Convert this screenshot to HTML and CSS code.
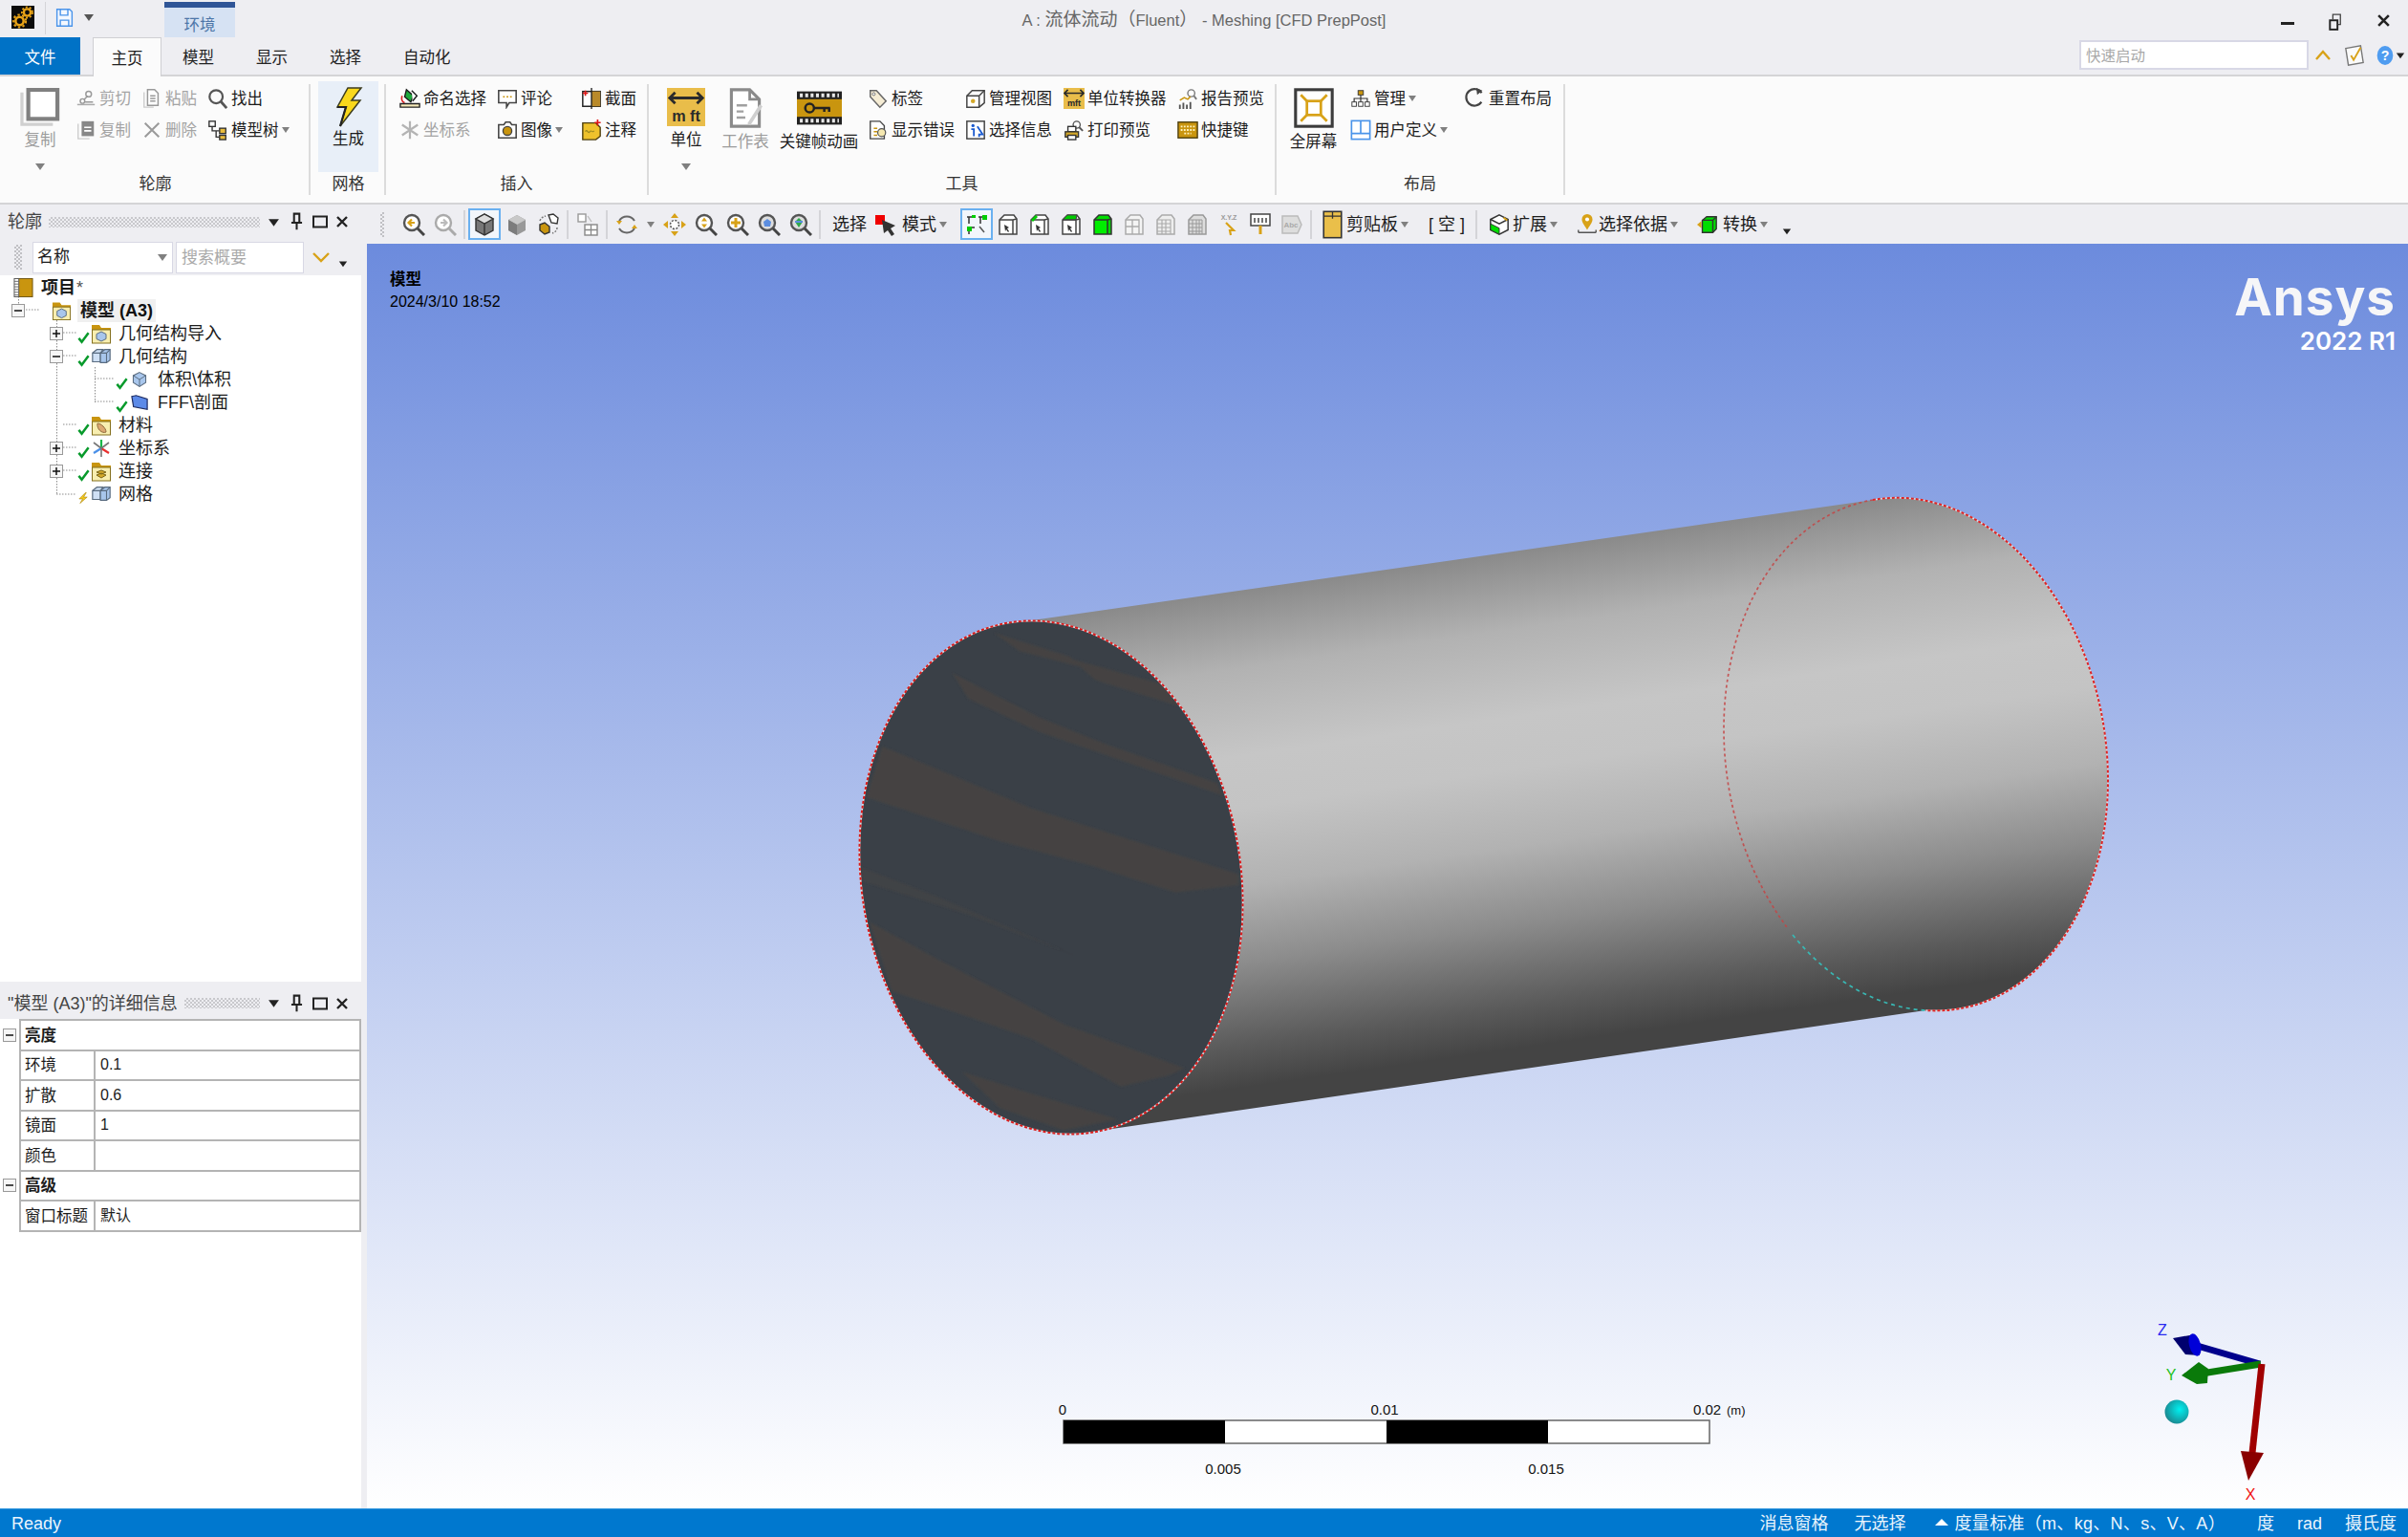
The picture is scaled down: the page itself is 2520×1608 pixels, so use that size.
FILE: index.html
```html
<!DOCTYPE html>
<html lang="zh-CN">
<head>
<meta charset="utf-8">
<title>A : 流体流动（Fluent） - Meshing [CFD PrepPost]</title>
<link rel="stylesheet" href="styles.css">
</head>
<body>
<svg class="defs" aria-hidden="true">
  <symbol id="logo" viewBox="0 0 24 24"><rect width="24" height="24" fill="#0c0c0c"/><circle cx="16.5" cy="7" r="3.6" fill="none" stroke="#e8a317" stroke-width="2.4"/><circle cx="16.5" cy="7" r="5.6" fill="none" stroke="#e8a317" stroke-width="1.8" stroke-dasharray="2 2"/><circle cx="8.5" cy="16" r="4.2" fill="none" stroke="#e8a317" stroke-width="2.6"/><circle cx="8.5" cy="16" r="6.6" fill="none" stroke="#e8a317" stroke-width="2" stroke-dasharray="2.4 2.4"/></symbol>
  <symbol id="save" viewBox="0 0 24 24"><path d="M3 2h15l3 3v17H3z" fill="#f4f8ff" stroke="#4a94ea" stroke-width="1.6"/><path d="M7 2v7h9V2M7 22v-7h10v7" fill="none" stroke="#4a94ea" stroke-width="1.6"/></symbol>
  <symbol id="dn" viewBox="0 0 12 12"><path d="M1 3h10L6 10z" fill="currentColor"/></symbol>
  <symbol id="pin" viewBox="0 0 14 20"><path d="M3 1h8M4 1h6v10H4zM1 11h12M7 11v8" fill="none" stroke="#222" stroke-width="2.2"/></symbol>
  <symbol id="box" viewBox="0 0 16 14"><rect x="1" y="1.5" width="14" height="11" fill="none" stroke="#222" stroke-width="2"/></symbol>
  <symbol id="xx" viewBox="0 0 14 14"><path d="M2 2l10 10M12 2L2 12" stroke="#222" stroke-width="2.4"/></symbol>
  <symbol id="minus" viewBox="0 0 14 14"><rect x=".5" y=".5" width="13" height="13" fill="#f6f6f6" stroke="#999"/><path d="M3 7h8" stroke="#111" stroke-width="1.5"/></symbol>
  <symbol id="plus" viewBox="0 0 14 14"><rect x=".5" y=".5" width="13" height="13" fill="#f6f6f6" stroke="#999"/><path d="M3 7h8M7 3v8" stroke="#111" stroke-width="1.5"/></symbol>
  <symbol id="check" viewBox="0 0 14 14"><path d="M1.5 8l3.4 4L12.5 2" fill="none" stroke="#089a2b" stroke-width="2.7"/></symbol>
  <symbol id="zap" viewBox="0 0 14 14"><path d="M9 1L2 8h4l-3 5 8-7H7l3-5z" fill="#f2c81c" stroke="#b08a10" stroke-width=".7"/></symbol>
  <symbol id="book" viewBox="0 0 22 22"><rect x="5" y="1" width="16" height="20" fill="#c9950f" stroke="#6d5410"/><rect x="1" y="1" width="5" height="20" fill="#fff" stroke="#555"/><path d="M1 4h5M1 7h5M1 10h5M1 13h5M1 16h5M1 19h5" stroke="#666"/></symbol>
  <symbol id="cube" viewBox="0 0 22 22"><path d="M11 2l8 4v9l-8 5-8-5V6z" fill="#a8c6ec" stroke="#5a6c80" stroke-width="1.3"/><path d="M3 6l8 5 8-5M11 11v9" fill="none" stroke="#5a6c80" stroke-width="1.2"/></symbol>
  <symbol id="cubes" viewBox="0 0 24 22"><path d="M2 7l5-4h7l-3 4v10H2z" fill="#cfe0f5" stroke="#5a6c80" stroke-width="1.3"/><path d="M11 7l5-4h6v12l-4 3h-7z" fill="#a8c6ec" stroke="#5a6c80" stroke-width="1.3"/><path d="M2 7h9M11 7h7v11M18 7l4-4" fill="none" stroke="#5a6c80" stroke-width="1.2"/></symbol>
  <symbol id="fA" viewBox="0 0 22 22"><path d="M1 2h8l2 3h10v4H1z" fill="#c9950f"/><rect x="1.5" y="7" width="19" height="14" fill="#f8eeb0" stroke="#84701e"/><path d="M11 9l5 2.5v5L11 19l-5-2.5v-5z" fill="#a8c6ec" stroke="#5a6c80"/></symbol>
  <symbol id="fB" viewBox="0 0 22 22"><path d="M1 2h8l2 3h10v4H1z" fill="#c9950f"/><rect x="1.5" y="7" width="19" height="14" fill="#f8eeb0" stroke="#84701e"/><path d="M7 9c4 0 9 5 9 9-4 2-10-3-9-9z" fill="#dca872" stroke="#8e6a3c"/></symbol>
  <symbol id="fC" viewBox="0 0 22 22"><path d="M1 2h8l2 3h10v4H1z" fill="#c9950f"/><rect x="1.5" y="7" width="19" height="14" fill="#f8eeb0" stroke="#84701e"/><path d="M6 12l5-2 5 2-5 2zM6 15l5-2 5 2-5 3z" fill="#d4a92a" stroke="#7b6618"/></symbol>
  <symbol id="coord" viewBox="0 0 22 22"><path d="M11 11V2" stroke="#19b84a" stroke-width="2.2"/><path d="M11 11L3 16" stroke="#4a90e8" stroke-width="2.2"/><path d="M11 11l8 5" stroke="#e83030" stroke-width="2.2"/><path d="M11 11L3 5M11 11l8-6M11 11v9" stroke="#777" stroke-width="1.6"/></symbol>
  <symbol id="face" viewBox="0 0 20 18"><path d="M1 2l5-1 13 4v12L3 14z" fill="#5c8ae8" stroke="#1c2a60" stroke-width="1.3"/></symbol>
  <symbol id="copybig" viewBox="0 0 44 42"><path d="M2 5v35h34" fill="none" stroke="#d0d0d0" stroke-width="3.4"/><rect x="9" y="2" width="32" height="32" fill="#fff" stroke="#808080" stroke-width="4.4"/></symbol>
  <symbol id="cut" viewBox="0 0 24 24"><path d="M2 19h20" stroke="#aaa" stroke-width="1.6"/><circle cx="15" cy="7" r="3.2" fill="none" stroke="#999" stroke-width="1.6"/><circle cx="8" cy="15" r="2.6" fill="none" stroke="#999" stroke-width="1.6"/><path d="M10 13l4-4M11 16h9" stroke="#999" stroke-width="1.6"/></symbol>
  <symbol id="paste" viewBox="0 0 24 24"><path d="M3 5v17h11" fill="none" stroke="#ccc" stroke-width="1.5"/><path d="M7 2h8l4 4v14H7z" fill="#fff" stroke="#999" stroke-width="1.6"/><path d="M10 9h6M10 12h6M10 15h6" stroke="#999" stroke-width="1.5"/></symbol>
  <symbol id="find" viewBox="0 0 24 24"><circle cx="10" cy="10" r="7.5" fill="none" stroke="#555" stroke-width="2.4"/><path d="M15 15l7 8" stroke="#555" stroke-width="3"/></symbol>
  <symbol id="copydoc" viewBox="0 0 24 24"><path d="M3 5v17h13" fill="none" stroke="#ccc" stroke-width="1.5"/><rect x="7" y="2" width="14" height="17" fill="#888"/><path d="M10 9h8M10 13h8" stroke="#fff" stroke-width="1.8"/></symbol>
  <symbol id="del" viewBox="0 0 24 24"><path d="M4 4l16 16M20 4L4 20" stroke="#9a9a9a" stroke-width="2.2"/></symbol>
  <symbol id="mtree" viewBox="0 0 24 24"><rect x="2" y="2" width="7" height="6" fill="#fff" stroke="#333" stroke-width="1.5"/><rect x="14" y="10" width="7" height="6" fill="#e9bc3c" stroke="#333" stroke-width="1.5"/><rect x="14" y="18" width="7" height="5" fill="#e9bc3c" stroke="#333" stroke-width="1.5"/><path d="M5.5 8v5h8M10 13v7h4" fill="none" stroke="#333" stroke-width="1.5"/></symbol>
  <symbol id="bolt" viewBox="0 0 30 42"><path d="M14 1h14L18 14h9L6 41l6-20H3z" fill="#f9d81c" stroke="#3c3c20" stroke-width="1.5"/><path d="M6 41l6-20H3" fill="none" stroke="#222" stroke-width="2.2"/></symbol>
  <symbol id="named" viewBox="0 0 24 24"><path d="M8 2l8 7-3 7-7-6z" fill="#1fa83c" stroke="#1a1a1a" stroke-width="1.5"/><path d="M14 3l6 6-5 6" fill="#fff" stroke="#1a1a1a" stroke-width="1.5"/><path d="M3 9c-1 4 0 7 3 8" fill="none" stroke="#d82020" stroke-width="1.8"/><path d="M1 18h22v4H1z" fill="#f4e9b8" stroke="#222" stroke-width="1.5"/></symbol>
  <symbol id="comment" viewBox="0 0 24 24"><path d="M2 3h20v14h-8l-3 5v-5H2z" fill="#fff" stroke="#444" stroke-width="1.7"/><path d="M7 10h2M11 10h2M15 10h2" stroke="#c9950f" stroke-width="1.7"/></symbol>
  <symbol id="section" viewBox="0 0 24 24"><rect x="2" y="4" width="20" height="17" fill="#fff" stroke="#222" stroke-width="1.6"/><rect x="12" y="4" width="10" height="17" fill="#b98a2a"/><path d="M12 0v24" stroke="#222" stroke-width="1.5"/><path d="M2 6h6M5 3v6" stroke="#e01818" stroke-width="1.8"/></symbol>
  <symbol id="csys" viewBox="0 0 24 24"><path d="M12 12V2M12 12v10M12 12L3 6M12 12l9-6M12 12l-9 6M12 12l9 6" stroke="#b4b4b4" stroke-width="2.4"/></symbol>
  <symbol id="camera" viewBox="0 0 24 24"><path d="M2 6h6l2-3h5l2 3h5v15H2z" fill="#fff" stroke="#444" stroke-width="1.7"/><circle cx="12" cy="13" r="5" fill="#c9950f" stroke="#444" stroke-width="1.5"/></symbol>
  <symbol id="note" viewBox="0 0 24 24"><path d="M2 4h15l5 5v10l-5 4H2z" fill="#eec22c" stroke="#4c3e10" stroke-width="1.5"/><path d="M5 14c2-4 3 3 5 0s3 2 5-1" fill="none" stroke="#9c8a20" stroke-width="1.3"/><path d="M19 0v7M15.5 3.5h7" stroke="#e01818" stroke-width="1.8"/></symbol>
  <symbol id="unit" viewBox="0 0 42 42"><rect width="42" height="42" fill="#e9bd4a"/><path d="M3 11h36M9 5l-6 6 6 6M33 5l6 6-6 6" fill="none" stroke="#2b2b2b" stroke-width="3"/></symbol>
  <symbol id="sheet" viewBox="0 0 40 46"><path d="M4 2h21l11 11v31H4z" fill="#fff" stroke="#8a8a8a" stroke-width="3.4"/><path d="M25 2v11h11" fill="none" stroke="#8a8a8a" stroke-width="3"/><path d="M10 20h12M10 27h8M10 34h10" stroke="#a0a0a0" stroke-width="2.6"/><path d="M38 20L24 42" stroke="#cfcfcf" stroke-width="4"/></symbol>
  <symbol id="film" viewBox="0 0 46 34"><rect width="46" height="34" fill="#222"/><rect y="8" width="46" height="18" fill="#c9950f"/><path d="M3 4h40M3 30h40" stroke="#e8e8e8" stroke-width="4" stroke-dasharray="3 2.5"/><circle cx="13" cy="17" r="4.5" fill="none" stroke="#222" stroke-width="2.4"/><path d="M17 17h17M28 17v4M33 17v4" stroke="#222" stroke-width="2.4"/></symbol>
  <symbol id="tag" viewBox="0 0 24 24"><path d="M3 3h7l11 12-7 7L3 10z" fill="#f5ecd4" stroke="#666" stroke-width="1.6"/><circle cx="7" cy="7" r="1.6" fill="#fff" stroke="#666"/></symbol>
  <symbol id="err" viewBox="0 0 24 24"><path d="M3 2h11l5 5v15H3z" fill="#fff" stroke="#444" stroke-width="1.5"/><path d="M7 10h4M7 14h4M7 18h4" stroke="#c9950f" stroke-width="1.7"/><circle cx="16" cy="15" r="4.5" fill="#f5e8b0" stroke="#555" stroke-width="1.3"/></symbol>
  <symbol id="mview" viewBox="0 0 24 24"><path d="M2 9l6-6h14v14l-6 5H2z" fill="#fff" stroke="#444" stroke-width="1.6"/><path d="M2 9h14v13M16 9l6-6" fill="none" stroke="#444" stroke-width="1.6"/><circle cx="9" cy="15" r="2.5" fill="#d4a92a"/></symbol>
  <symbol id="info" viewBox="0 0 24 24"><rect x="2" y="2" width="20" height="20" fill="#fff" stroke="#444" stroke-width="1.6"/><circle cx="9" cy="7" r="1.8" fill="#1a5ad0"/><path d="M7 11h3v8M14 8l6 9h-4v3" fill="none" stroke="#1a5ad0" stroke-width="2"/></symbol>
  <symbol id="uconv" viewBox="0 0 24 24"><rect width="24" height="24" fill="#e9bd4a"/><path d="M1 6h22M5 2L1 6l4 4M19 2l4 4-4 4" fill="none" stroke="#2b2b2b" stroke-width="1.8"/></symbol>
  <symbol id="print" viewBox="0 0 24 24"><circle cx="15" cy="6" r="4" fill="#fff" stroke="#555" stroke-width="1.5"/><path d="M18 9l4 4" stroke="#555" stroke-width="2"/><rect x="5" y="8" width="9" height="6" fill="#fff" stroke="#333" stroke-width="1.5"/><rect x="2" y="14" width="15" height="6" fill="#d4a92a" stroke="#333" stroke-width="1.5"/><rect x="5" y="18" width="9" height="5" fill="#fff" stroke="#333" stroke-width="1.5"/></symbol>
  <symbol id="report" viewBox="0 0 24 24"><circle cx="16" cy="6" r="4" fill="#fff" stroke="#777" stroke-width="1.5"/><path d="M19 9l3 4" stroke="#777" stroke-width="2"/><path d="M3 14l5-3 4 2 3-3" fill="none" stroke="#c9950f" stroke-width="1.7"/><path d="M3 24v-5M7 24v-7M11 24v-5M15 24v-8" stroke="#555" stroke-width="2"/></symbol>
  <symbol id="keys" viewBox="0 0 24 24"><rect x="1" y="3" width="22" height="18" fill="#c9950f" stroke="#4c3e10" stroke-width="1.5"/><path d="M4 8h16M4 12h16M8 16h8" stroke="#fff3c0" stroke-width="2" stroke-dasharray="2 1.5"/></symbol>
  <symbol id="full" viewBox="0 0 46 46"><rect x="2" y="2" width="42" height="42" fill="#fff" stroke="#3c3c3c" stroke-width="3.4"/><rect x="15" y="15" width="16" height="16" fill="none" stroke="#d8a218" stroke-width="3"/><path d="M15 15L8 8M31 15l7-7M15 31l-7 7M31 31l7 7" stroke="#d8a218" stroke-width="3"/></symbol>
  <symbol id="manage" viewBox="0 0 24 24"><rect x="9" y="3" width="6" height="5" fill="#c9950f" stroke="#333"/><rect x="2" y="16" width="5" height="5" fill="#fff" stroke="#333"/><rect x="9.5" y="16" width="5" height="5" fill="#fff" stroke="#333"/><rect x="17" y="16" width="5" height="5" fill="#fff" stroke="#333"/><path d="M12 8v8M4.5 16v-4h15v4" fill="none" stroke="#333" stroke-width="1.3"/></symbol>
  <symbol id="userdef" viewBox="0 0 24 24"><rect x="1.5" y="1.5" width="21" height="21" fill="#fff" stroke="#4a94ea" stroke-width="1.8"/><path d="M2 16h20M12 2v14" stroke="#4a94ea" stroke-width="1.8"/></symbol>
  <symbol id="reset" viewBox="0 0 24 24"><path d="M15 3A9.5 9.5 0 1 0 20 12" fill="none" stroke="#444" stroke-width="2.4" transform="rotate(30 12 12)"/><path d="M13 0l7 3-6 5z" fill="#444"/></symbol>
  <symbol id="qchev" viewBox="0 0 18 12"><path d="M2 10l7-8 7 8" fill="none" stroke="#d8a218" stroke-width="2.4"/></symbol>
  <symbol id="dchev" viewBox="0 0 18 11"><path d="M1 1l8 8 8-8" fill="none" stroke="#d8a218" stroke-width="2.4"/></symbol>
  <symbol id="qcheck" viewBox="0 0 24 26"><path d="M2 5l17-3 3 19-17 3z" fill="#fafafa" stroke="#777" stroke-width="1.5"/><path d="M8 13l3 5 8-14" fill="none" stroke="#d8a218" stroke-width="2"/></symbol>
  <symbol id="help" viewBox="0 0 24 26"><ellipse cx="12" cy="13" rx="10" ry="12" fill="#4f9cf0"/></symbol>
  <symbol id="restore" viewBox="0 0 16 22"><rect x="1.5" y="9" width="9" height="11" fill="none" stroke="#222" stroke-width="2.2"/><path d="M5 8V2h9v12h-3" fill="none" stroke="#444" stroke-width="1.5"/></symbol>
  <symbol id="zback" viewBox="0 0 24 24"><circle cx="10" cy="10" r="8" fill="#fff" stroke="#555" stroke-width="2.4"/><path d="M16 16l7 7" stroke="#444" stroke-width="3"/><path d="M13 10H7M10 6.500L6.500 10l3.500 3.500" fill="none" stroke="#d8a218" stroke-width="2.2"/></symbol>
  <symbol id="zfwd" viewBox="0 0 24 24"><circle cx="10" cy="10" r="8" fill="#fff" stroke="#aaa" stroke-width="2.4"/><path d="M16 16l7 7" stroke="#aaa" stroke-width="3"/><path d="M7 10h6M10 6.500l3.500 3.500-3.500 3.500" fill="none" stroke="#bbb" stroke-width="2.2"/></symbol>
  <symbol id="ziso" viewBox="0 0 24 24"><path d="M12 1l9 5v12l-9 5-9-5V6z" fill="#777" stroke="#333" stroke-width="1.4"/><path d="M12 1l9 5-9 5-9-5z" fill="#ddd" stroke="#333" stroke-width="1.4"/><path d="M12 11v12" stroke="#333" stroke-width="1.4"/></symbol>
  <symbol id="zcube" viewBox="0 0 24 24"><path d="M12 2l9 5v11l-9 5-9-5V7z" fill="#999"/><path d="M12 2l9 5-9 5-9-5z" fill="#c8c8c8"/><path d="M12 12v11L3 18V7z" fill="#7c7c7c"/></symbol>
  <symbol id="zmulti" viewBox="0 0 24 24"><path d="M12 2l5-1 5 4-1 6-6-1z" fill="#fff" stroke="#333" stroke-width="1.4"/><path d="M3 12l5-2 5 4v6l-5 2-5-4z" fill="#c9950f" stroke="#333" stroke-width="1.4"/><path d="M3 8c1-3 3-4 6-5M21 15c0 3-2 5-5 6" fill="none" stroke="#777" stroke-width="1.5" stroke-dasharray="2 1.5"/></symbol>
  <symbol id="zvp" viewBox="0 0 24 24"><rect x="2" y="1" width="8" height="8" fill="#fff" stroke="#999" stroke-width="1.4"/><rect x="9" y="12" width="13" height="11" fill="#fff" stroke="#888" stroke-width="1.4"/><path d="M15.5 12v11M9 17.5h13" stroke="#888" stroke-width="1.3"/><path d="M12 3l4 6" stroke="#bbb" stroke-width="1.3"/></symbol>
  <symbol id="zrot" viewBox="0 0 24 24"><path d="M4 8a9.5 9.5 0 0 1 16 0M20 16a9.5 9.5 0 0 1-16 0" fill="none" stroke="#666" stroke-width="2"/><path d="M1 8h6l-3 4zM23 16h-6l3-4z" fill="#d8a218"/></symbol>
  <symbol id="zpan" viewBox="0 0 24 24"><path d="M12 0l4 5H8zM12 24l4-5H8zM0 12l5-4v8zM24 12l-5-4v8z" fill="#d8a218"/><circle cx="12" cy="12" r="4.5" fill="#fff" stroke="#555" stroke-width="1.5" stroke-dasharray="2 1.5"/></symbol>
  <symbol id="zfit" viewBox="0 0 24 24"><circle cx="10" cy="10" r="8" fill="#fff" stroke="#555" stroke-width="2.4"/><path d="M16 16l7 7" stroke="#444" stroke-width="3"/><path d="M10 4.500l3 4H7zM10 15.500l3-4H7z" fill="#d8a218"/></symbol>
  <symbol id="zplus" viewBox="0 0 24 24"><circle cx="10" cy="10" r="8" fill="#fff" stroke="#555" stroke-width="2.4"/><path d="M16 16l7 7" stroke="#444" stroke-width="3"/><path d="M5 10h10M10 5v10" stroke="#d8a218" stroke-width="3"/></symbol>
  <symbol id="zblue" viewBox="0 0 24 24"><circle cx="10" cy="10" r="8" fill="#ddd" stroke="#555" stroke-width="2.4"/><path d="M16 16l7 7" stroke="#444" stroke-width="3"/><path d="M10 6l4 3-1 5H7L6 9z" fill="#5c8ee0"/></symbol>
  <symbol id="zgreen" viewBox="0 0 24 24"><circle cx="10" cy="10" r="8" fill="#ddd" stroke="#555" stroke-width="2.4"/><path d="M16 16l7 7" stroke="#444" stroke-width="3"/><path d="M10 5l4 4-4 6-4-6z" fill="#2fa84a"/><path d="M6 9h8" stroke="#5c8ee0" stroke-width="2"/></symbol>
  <symbol id="arrow" viewBox="0 0 24 24"><path d="M2 2h10v10H2z" fill="#f00000"/><path d="M9 7l14 6-5 3 4 6-3 2-4-6-4 3z" fill="#333"/></symbol>
  <symbol id="s0" viewBox="0 0 24 24"><path d="M2 4h8M4 4v7M14 4h8M16 4v7" fill="none" stroke="#333" stroke-width="1.5"/><path d="M2 15h8M4 15v7" fill="none" stroke="#333" stroke-width="1.5"/><path d="M15 14l5 6" stroke="#555" stroke-width="1.5"/><rect x="7" y="2" width="4" height="3" fill="#0c0"/><rect x="18" y="2" width="5" height="5" fill="#0c0"/><rect x="2" y="14" width="5" height="5" fill="#0c0"/></symbol>
  <symbol id="s1" viewBox="0 0 24 24"><path d="M3 7l5-5h10l3 4v16H3z" fill="#fff" stroke="#444" stroke-width="1.5"/><path d="M3 7h14v15M17 7l4-1" fill="none" stroke="#444" stroke-width="1.5"/><path d="M8 12l5 3-2 1 2 3-1 1-2-3-1 2z" fill="#333"/></symbol>
  <symbol id="s2" viewBox="0 0 24 24"><path d="M3 7l5-5h10l3 4v16H3z" fill="#fff" stroke="#444" stroke-width="1.5"/><path d="M3 7h14v15M17 7l4-1" fill="none" stroke="#444" stroke-width="1.5"/><path d="M3 7l5-5 2 2-5 5z" fill="#0c0"/><path d="M8 12l5 3-2 1 2 3-1 1-2-3-1 2z" fill="#333"/></symbol>
  <symbol id="s3" viewBox="0 0 24 24"><path d="M3 7l5-5h10l3 4v16H3z" fill="#fff" stroke="#444" stroke-width="1.5"/><path d="M3 7l5-5h10l-1 5z" fill="#0c0" stroke="#444"/><path d="M3 7h14v15M17 7l4-1" fill="none" stroke="#444" stroke-width="1.5"/><path d="M8 12l5 3-2 1 2 3-1 1-2-3-1 2z" fill="#333"/></symbol>
  <symbol id="s4" viewBox="0 0 24 24"><path d="M3 7l5-5h10l3 4v16H3z" fill="#0d0" stroke="#333" stroke-width="1.5"/><path d="M3 7h14v15M17 7l4-1" fill="none" stroke="#333" stroke-width="1.5"/><rect x="4" y="8" width="12" height="13" fill="#0e0"/></symbol>
  <symbol id="s5" viewBox="0 0 24 24"><path d="M3 7l5-5h10l3 4v16H3z" fill="#f4f4f4" stroke="#aaa" stroke-width="1.5"/><path d="M3 7h14v15M10 7v15M3 14h14" fill="none" stroke="#aaa" stroke-width="1.3"/></symbol>
  <symbol id="s6" viewBox="0 0 24 24"><path d="M3 7l5-5h10l3 4v16H3z" fill="#eee" stroke="#aaa" stroke-width="1.5"/><path d="M3 7h14v15M8 7v15M12 7v15M3 11h14M3 15h14M3 19h14" fill="none" stroke="#aaa" stroke-width="1.1"/></symbol>
  <symbol id="s7" viewBox="0 0 24 24"><path d="M3 7l5-5h10l3 4v16H3z" fill="#ddd" stroke="#999" stroke-width="1.5"/><path d="M3 7h14v15M7 7v15M11 7v15M14 7v15M3 11h14M3 15h14M3 19h14" fill="none" stroke="#999" stroke-width="1"/></symbol>
  <symbol id="xyz" viewBox="0 0 24 24"><path d="M9 10l8 8-4 0 1 5" fill="none" stroke="#d8a218" stroke-width="2.2"/></symbol>
  <symbol id="lbl" viewBox="0 0 24 24"><rect x="2" y="1" width="20" height="12" fill="#fff" stroke="#444" stroke-width="1.5"/><path d="M6 5v5M10 5v5M14 5v5M18 5v5" stroke="#444" stroke-width="1.5"/><path d="M12 13v9" stroke="#d8a218" stroke-width="3"/></symbol>
  <symbol id="abc" viewBox="0 0 24 24"><path d="M2 3h16l4 9-4 9H2z" fill="#ddd" stroke="#bbb" stroke-width="1.5"/></symbol>
  <symbol id="clip" viewBox="0 0 24 34"><rect x="1.5" y="1.5" width="21" height="31" fill="#eabf4a" stroke="#333" stroke-width="1.8"/><path d="M2 7h20M12 2v8" stroke="#333" stroke-width="1.5"/></symbol>
  <symbol id="extend" viewBox="0 0 24 24"><path d="M12 1l10 5v12l-10 5L2 18V6z" fill="#fff" stroke="#333" stroke-width="1.6"/><path d="M2 6l10 5 10-5" fill="none" stroke="#333" stroke-width="1.6"/><path d="M2 11l10 5v7L2 18z" fill="#0d0" stroke="#333"/><path d="M17 4l4 3" stroke="#d8a218" stroke-width="2"/></symbol>
  <symbol id="bypin" viewBox="0 0 24 26"><path d="M12 1a6 6 0 0 1 6 6c0 4-4 8-6 12-2-4-6-8-6-12a6 6 0 0 1 6-6z" fill="#d8a218"/><circle cx="12" cy="7" r="2.2" fill="#fff"/><path d="M2 22h20M2 19v3M22 19v3" fill="none" stroke="#555" stroke-width="1.5"/></symbol>
  <symbol id="conv" viewBox="0 0 24 24"><path d="M0 12l5-4v8z" fill="#d8a218"/><path d="M6 7l5-4h11v14l-4 4H6z" fill="#0d0" stroke="#333" stroke-width="1.5"/><path d="M6 7h12v14M18 7l4-4" fill="none" stroke="#333" stroke-width="1.5"/></symbol>
</svg>

<div class="app">
  <header class="titlebar">
    <div class="qat">
      <svg class="logo"><use href="#logo"/></svg>
      <span class="qat-sep"></span>
      <svg class="saveic"><use href="#save"/></svg>
      <svg class="qat-dd"><use href="#dn"/></svg>
      <div class="ctx-tab">环境</div>
    </div>
    <div class="title">A : <span class="title-cjk">流体流动（</span>Fluent<span class="title-cjk">）</span> - Meshing [CFD PrepPost]</div>
    <div class="winbtns">
      <span class="wbtn"><span class="minbar"></span></span>
      <span class="wbtn"><svg class="wrestore"><use href="#restore"/></svg></span>
      <span class="wbtn"><svg class="wclose"><use href="#xx"/></svg></span>
    </div>
  </header>

  <nav class="tabs">
    <div class="tab-file">文件</div>
    <div class="tab tab-on">主页</div>
    <div class="tab">模型</div>
    <div class="tab">显示</div>
    <div class="tab">选择</div>
    <div class="tab">自动化</div>
    <div class="quick">快速启动</div>
    <svg class="qchev"><use href="#qchev"/></svg>
    <svg class="qcheck"><use href="#qcheck"/></svg>
    <svg class="qhelp" viewBox="0 0 24 26"><use href="#help"/><text x="12" y="19" text-anchor="middle" class="svghelp">?</text></svg>
    <svg class="qhelp-dd"><use href="#dn"/></svg>
  </nav>

  <section class="ribbon">
    <div class="group g1">
      <div class="gbody">
        <div class="big bw74 off"><svg class="bi bi44"><use href="#copybig"/></svg><span>复制</span><i class="ddg"></i></div>
        <div class="smalls c69">
          <div class="si off"><svg><use href="#cut"/></svg><span>剪切</span></div>
          <div class="si off"><svg><use href="#paste"/></svg><span>粘贴</span></div>
          <div class="si"><svg><use href="#find"/></svg><span>找出</span></div>
          <div class="si off"><svg><use href="#copydoc"/></svg><span>复制</span></div>
          <div class="si off"><svg><use href="#del"/></svg><span>删除</span></div>
          <div class="si"><svg><use href="#mtree"/></svg><span>模型树</span><i class="dd"></i></div>
        </div>
      </div>
      <div class="glabel">轮廓</div>
    </div>
    <div class="group g2">
      <div class="gbody">
        <div class="gen"><svg class="bolt"><use href="#bolt"/></svg><span>生成</span></div>
      </div>
      <div class="glabel">网格</div>
    </div>
    <div class="group g3">
      <div class="gbody">
        <div class="smalls c3">
          <div class="si"><svg><use href="#named"/></svg><span>命名选择</span></div>
          <div class="si"><svg><use href="#comment"/></svg><span>评论</span></div>
          <div class="si"><svg><use href="#section"/></svg><span>截面</span></div>
          <div class="si off"><svg><use href="#csys"/></svg><span>坐标系</span></div>
          <div class="si"><svg><use href="#camera"/></svg><span>图像</span><i class="dd"></i></div>
          <div class="si"><svg><use href="#note"/></svg><span>注释</span></div>
        </div>
      </div>
      <div class="glabel">插入</div>
    </div>
    <div class="group g4">
      <div class="gbody">
        <div class="big bw78"><svg class="bi bi42" viewBox="0 0 42 42"><use href="#unit"/><text x="21" y="37" text-anchor="middle" class="svgunit">m ft</text></svg><span>单位</span><i class="ddg"></i></div>
        <div class="big bw46 off"><svg class="bi bi42"><use href="#sheet"/></svg><span>工作表</span></div>
        <div class="big bw102"><svg class="bi bi47"><use href="#film"/></svg><span>关键帧动画</span></div>
        <div class="smalls c4">
          <div class="si"><svg><use href="#tag"/></svg><span>标签</span></div>
          <div class="si"><svg><use href="#mview"/></svg><span>管理视图</span></div>
          <div class="si"><svg viewBox="0 0 24 24"><use href="#uconv"/><text x="12" y="21" text-anchor="middle" class="svgunit2">mft</text></svg><span>单位转换器</span></div>
          <div class="si"><svg><use href="#report"/></svg><span>报告预览</span></div>
          <div class="si"><svg><use href="#err"/></svg><span>显示错误</span></div>
          <div class="si"><svg><use href="#info"/></svg><span>选择信息</span></div>
          <div class="si"><svg><use href="#print"/></svg><span>打印预览</span></div>
          <div class="si"><svg><use href="#keys"/></svg><span>快捷键</span></div>
        </div>
      </div>
      <div class="glabel">工具</div>
    </div>
    <div class="group g5">
      <div class="gbody">
        <div class="big bw77"><svg class="bi bi44"><use href="#full"/></svg><span>全屏幕</span></div>
        <div class="smalls c5">
          <div class="si"><svg><use href="#manage"/></svg><span>管理</span><i class="dd"></i></div>
          <div class="si"><svg><use href="#reset"/></svg><span>重置布局</span></div>
          <div class="si"><svg><use href="#userdef"/></svg><span>用户定义</span><i class="dd"></i></div>
        </div>
      </div>
      <div class="glabel">布局</div>
    </div>
  </section>

  <main class="main">
    <aside class="left">
      <div class="phead">
        <span class="ptitle">轮廓</span><span class="pgrip"></span>
        <svg class="pdn"><use href="#dn"/></svg><svg class="ppin"><use href="#pin"/></svg><svg class="pbox"><use href="#box"/></svg><svg class="pclose"><use href="#xx"/></svg>
      </div>
      <div class="filter">
        <span class="vgrip"></span>
        <div class="combo"><span>名称</span><i class="ddg"></i></div>
        <div class="search">搜索概要</div>
        <svg class="fchev"><use href="#dchev"/></svg>
        <svg class="fdn"><use href="#dn"/></svg>
      </div>
      <div class="tree">
        <svg class="tree-lines" viewBox="0 0 378 260">
          <path d="M19.5 22v8M27 36h14M59.5 47v182M66 60h14M66 84h14M66 156h14M66 180h14M66 204h14M59 229h21M99.5 96v37M99 108h21M99 132h21" fill="none" stroke="#8c8c8c" stroke-dasharray="1.5 1.5"/>
        </svg>
        <div class="trow l0"><svg class="ti-book"><use href="#book"/></svg><span class="b">项目</span><span class="bstar">*</span></div>
        <div class="trow l1"><svg class="exp"><use href="#minus"/></svg><svg class="ti-l1"><use href="#fA"/></svg><span class="b hl">模型 <span class="a3">(A3)</span></span></div>
        <div class="trow l2"><svg class="exp"><use href="#plus"/></svg><svg class="chk"><use href="#check"/></svg><svg class="ti"><use href="#fA"/></svg><span>几何结构导入</span></div>
        <div class="trow l2"><svg class="exp"><use href="#minus"/></svg><svg class="chk"><use href="#check"/></svg><svg class="ti"><use href="#cubes"/></svg><span>几何结构</span></div>
        <div class="trow l3"><svg class="chk"><use href="#check"/></svg><svg class="ti3"><use href="#cube"/></svg><span>体积\体积</span></div>
        <div class="trow l3"><svg class="chk"><use href="#check"/></svg><svg class="ti3"><use href="#face"/></svg><span>FFF\剖面</span></div>
        <div class="trow l2"><span class="exp"></span><svg class="chk"><use href="#check"/></svg><svg class="ti"><use href="#fB"/></svg><span>材料</span></div>
        <div class="trow l2"><svg class="exp"><use href="#plus"/></svg><svg class="chk"><use href="#check"/></svg><svg class="ti"><use href="#coord"/></svg><span>坐标系</span></div>
        <div class="trow l2"><svg class="exp"><use href="#plus"/></svg><svg class="chk"><use href="#check"/></svg><svg class="ti"><use href="#fC"/></svg><span>连接</span></div>
        <div class="trow l2"><span class="exp"></span><svg class="chk"><use href="#zap"/></svg><svg class="ti"><use href="#cubes"/></svg><span>网格</span></div>
      </div>
      <div class="phead dhead">
        <span class="ptitle">"模型 (A3)"的详细信息</span><span class="pgrip"></span>
        <svg class="pdn"><use href="#dn"/></svg><svg class="ppin"><use href="#pin"/></svg><svg class="pbox"><use href="#box"/></svg><svg class="pclose"><use href="#xx"/></svg>
      </div>
      <div class="details">
        <table class="dt">
          <colgroup><col class="col-ex"><col class="col-k"><col class="col-v"></colgroup>
          <tr><td class="ex"><svg class="exp"><use href="#minus"/></svg></td><th colspan="2">亮度</th></tr>
          <tr><td class="ex"></td><td>环境</td><td class="v">0.1</td></tr>
          <tr><td class="ex"></td><td>扩散</td><td class="v">0.6</td></tr>
          <tr><td class="ex"></td><td>镜面</td><td class="v">1</td></tr>
          <tr><td class="ex"></td><td>颜色</td><td class="v"></td></tr>
          <tr><td class="ex"><svg class="exp"><use href="#minus"/></svg></td><th colspan="2">高级</th></tr>
          <tr><td class="ex"></td><td>窗口标题</td><td class="v">默认</td></tr>
        </table>
      </div>
    </aside>

    <div class="right">
      <div class="toolbar">
        <span class="tgrip"></span>
        <span class="tc"><svg><use href="#zback"/></svg></span>
        <span class="tc"><svg><use href="#zfwd"/></svg></span>
        <span class="tsep"></span>
        <span class="tc tsel"><svg><use href="#ziso"/></svg></span>
        <span class="tc"><svg><use href="#zcube"/></svg></span>
        <span class="tc"><svg><use href="#zmulti"/></svg></span>
        <span class="tsep"></span>
        <span class="tc"><svg><use href="#zvp"/></svg></span>
        <span class="tsep"></span>
        <span class="tc"><svg><use href="#zrot"/></svg></span>
        <span class="tdd"><i class="dd"></i></span>
        <span class="tc"><svg><use href="#zpan"/></svg></span>
        <span class="tc"><svg><use href="#zfit"/></svg></span>
        <span class="tc"><svg><use href="#zplus"/></svg></span>
        <span class="tc"><svg><use href="#zblue"/></svg></span>
        <span class="tc"><svg><use href="#zgreen"/></svg></span>
        <span class="tsep"></span>
        <span class="tt tt-sel">选择</span>
        <span class="tc tc-arrow"><svg><use href="#arrow"/></svg></span>
        <span class="tt">模式</span><i class="dd"></i>
        <span class="tc tsel tsel2"><svg><use href="#s0"/></svg></span>
        <span class="tc"><svg><use href="#s1"/></svg></span>
        <span class="tc"><svg><use href="#s2"/></svg></span>
        <span class="tc"><svg><use href="#s3"/></svg></span>
        <span class="tc"><svg><use href="#s4"/></svg></span>
        <span class="tc"><svg><use href="#s5"/></svg></span>
        <span class="tc"><svg><use href="#s6"/></svg></span>
        <span class="tc"><svg><use href="#s7"/></svg></span>
        <span class="tc"><svg viewBox="0 0 24 24"><use href="#xyz"/><text x="12" y="7" text-anchor="middle" class="svgxyz">X.Y.Z</text></svg></span>
        <span class="tc"><svg><use href="#lbl"/></svg></span>
        <span class="tc"><svg viewBox="0 0 24 24"><use href="#abc"/><text x="11" y="15" text-anchor="middle" class="svgabc">Abc</text></svg></span>
        <span class="tsep"></span>
        <svg class="tclip"><use href="#clip"/></svg><span class="tt">剪贴板</span><i class="dd"></i>
        <span class="tt tt-empty">[ 空 ]</span>
        <span class="tsep"></span>
        <svg class="tic"><use href="#extend"/></svg><span class="tt">扩展</span><i class="dd"></i>
        <svg class="tic tic-by"><use href="#bypin"/></svg><span class="tt">选择依据</span><i class="dd"></i>
        <svg class="tic tic-cv"><use href="#conv"/></svg><span class="tt">转换</span><i class="dd"></i>
        <svg class="tend"><use href="#dn"/></svg>
      </div>

      <div class="viewport">
        <svg class="canvas" viewBox="384 255 2136 1323">
          <defs>
            <linearGradient id="shade" gradientUnits="userSpaceOnUse" x1="1975" y1="521" x2="2051" y2="1052">
              <stop offset="0" stop-color="#8a8a8a"/><stop offset=".15" stop-color="#b2b2b2"/><stop offset=".32" stop-color="#c6c6c6"/><stop offset=".42" stop-color="#c4c4c4"/><stop offset=".57" stop-color="#b2b2b2"/><stop offset=".72" stop-color="#8c8c8c"/><stop offset=".88" stop-color="#5a5a5a"/><stop offset=".96" stop-color="#444"/><stop offset="1" stop-color="#444"/>
            </linearGradient>
            <clipPath id="fc"><ellipse cx="1100" cy="918" rx="270.2" ry="198.3" transform="rotate(80.6 1100 918)"/></clipPath>
            <radialGradient id="ball" cx=".62" cy=".4" r=".7"><stop offset="0" stop-color="#00f0f0"/><stop offset="1" stop-color="#1c7f88"/></radialGradient>
            <filter id="soft" x="-5%" y="-5%" width="110%" height="110%"><feGaussianBlur stdDeviation="2.5"/></filter>
          </defs>
          <path d="M1080 649L1960 523A270.2 198.3 80.6 0 1 2206 814A270.2 198.3 80.6 0 1 2015 1057L1150 1183Z" fill="url(#shade)"/>
          <g clip-path="url(#fc)">
            <rect x="880" y="620" width="440" height="600" fill="#3a4047"/>
            <g transform="translate(880 620) scale(.3333 .3827)" fill="#444343" filter="url(#soft)">
              <polygon points="130,420 600,590 1250,770 1250,800 1050,820 800,750 500,680 80,560"/>
              <polygon points="720,180 1010,250 1060,310 800,240"/>
              <polygon points="480,110 720,175 760,205 560,160"/>
              <polygon points="350,220 620,340 820,410 1180,520 1200,555 950,480 620,380 400,290"/>
              <polygon points="90,900 300,1000 700,1180 1080,1300 1030,1320 880,1350 600,1220 300,1130 160,1090"/>
              <polygon points="380,1310 600,1370 870,1440 700,1470 500,1410"/>
              <polygon points="60,750 300,830 700,980 760,1000 400,880 70,790" opacity=".6"/>
            </g>
          </g>
          <ellipse cx="1100" cy="918" rx="270.2" ry="198.3" transform="rotate(80.6 1100 918)" fill="none" stroke="#d8dfe8" stroke-width="1.6"/>
          <ellipse cx="1100" cy="918" rx="270.2" ry="198.3" transform="rotate(80.6 1100 918)" fill="none" stroke="#d81c1c" stroke-width="2" stroke-dasharray="3 2"/>
          <path d="M1960 523A270.2 198.3 80.6 0 1 2206 814A270.2 198.3 80.6 0 1 2015 1057" fill="none" stroke="#d8dfe8" stroke-width="1.6"/>
          <path d="M1960 523A270.2 198.3 80.6 0 1 2206 814A270.2 198.3 80.6 0 1 2015 1057" fill="none" stroke="#de2424" stroke-width="2" stroke-dasharray="3 2"/>
          <path d="M1960 523A270.2 198.3 80.6 0 0 1804 764A270.2 198.3 80.6 0 0 1870 970" fill="none" stroke="#c44444" stroke-width="1.7" stroke-dasharray="3 3" opacity=".85"/>
          <path d="M1876 978A270.2 198.3 80.6 0 0 2015 1057" fill="none" stroke="#38b8b4" stroke-width="1.7" stroke-dasharray="4 4"/>

          <g class="scale">
            <rect x="1113" y="1486" width="676" height="24" fill="#fff" stroke="#666" stroke-width="1.5"/>
            <rect class="seg" x="1113" y="1486" width="169" height="24"/>
            <rect class="seg" x="1451" y="1486" width="169" height="24"/>
            <text x="1112" y="1480" text-anchor="middle">0</text>
            <text x="1449" y="1480" text-anchor="middle">0.01</text>
            <text x="1772" y="1480">0.02</text>
            <text x="1807" y="1480" class="unit-m">(m)</text>
            <text x="1280" y="1542" text-anchor="middle">0.005</text>
            <text x="1618" y="1542" text-anchor="middle">0.015</text>
          </g>

          <g class="triad">
            <path d="M2365 1427L2296 1407" stroke="#00008c" stroke-width="7"/>
            <path d="M2274 1400L2297 1396L2302 1418L2287 1417Z" fill="#00006e"/>
            <ellipse cx="2297" cy="1407" rx="6" ry="12" fill="#0000d8" transform="rotate(-15 2297 1407)"/>
            <path d="M2366 1427L2304 1437" stroke="#0a7a0a" stroke-width="7"/>
            <path d="M2283 1439L2301 1425L2311 1432L2310 1447L2299 1448Z" fill="#0a7a0a"/>
            <path d="M2367 1427L2357 1520" stroke="#a00000" stroke-width="7"/>
            <path d="M2345 1518L2369 1520L2353 1549Z" fill="#8a0000"/>
            <circle cx="2278" cy="1477" r="12.5" fill="url(#ball)"/>
            <text x="2263" y="1397" text-anchor="middle" class="tz">Z</text>
            <text x="2272" y="1444" text-anchor="middle" class="ty">Y</text>
            <text x="2355" y="1569" text-anchor="middle" class="tx">X</text>
          </g>
        </svg>
        <div class="vp-info"><div class="vp-title">模型</div><div class="vp-date">2024/3/10 18:52</div></div>
        <div class="brand"><div class="brand-name">Ansys</div><div class="brand-ver">2022 R1</div></div>
      </div>
    </div>
  </main>

  <footer class="status">
    <span class="ready">Ready</span>
    <span class="st st-msg">消息窗格</span>
    <span class="st st-sel">无选择</span>
    <i class="st-up"></i>
    <span class="st st-unit">度量标准（m、kg、N、s、V、A）</span>
    <span class="st st-deg">度</span>
    <span class="st st-rad">rad</span>
    <span class="st st-temp">摄氏度</span>
  </footer>
</div>
</body>
</html>
```

FILE: styles.css
```css
* { box-sizing: border-box; }
html, body { margin: 0; padding: 0; }
body {
  width: 2520px; height: 1608px; overflow: hidden;
  background: #eeeef2; color: #1c1c1c;
  font: 16.5px/22px "Liberation Sans", "Noto Sans CJK SC", sans-serif;
}
.defs { width: 0; height: 0; display: block; overflow: hidden; }
.svgunit { font: 700 17px "Liberation Sans", sans-serif; fill: #2b2b2b; }
.svgunit2 { font: 700 10px "Liberation Sans", sans-serif; fill: #2b2b2b; }
.svghelp { font: 700 17px "Liberation Sans", sans-serif; fill: #fff; }
.svgxyz { font: 700 7px "Liberation Sans", sans-serif; fill: #999; }
.svgabc { font: 700 8px "Liberation Sans", sans-serif; fill: #aaa; }
i { display: block; }
.dd { width: 0; height: 0; border: 4px solid transparent; border-top: 6px solid #808080; border-bottom: 0; margin-left: 3px; flex: none; }
.ddg { width: 0; height: 0; border: 5px solid transparent; border-top: 7px solid #808080; border-bottom: 0; }

.app { display: flex; flex-direction: column; width: 2520px; height: 1608px; }

/* title row */
.titlebar { height: 39px; flex: none; display: grid; grid-template-columns: 1fr auto 1fr; align-items: center; background: #eeeef2; }
.qat { display: flex; align-items: flex-start; height: 39px; padding-left: 12px; }
.logo { width: 24px; height: 24px; margin-top: 4px; }
.qat-sep { width: 1px; height: 34px; background: #d4d4d8; margin: 0 9px 0 11px; }
.saveic { width: 21px; height: 21px; margin-top: 6px; }
.qat-dd { width: 12px; height: 12px; margin: 10px 0 0 9px; color: #555; }
.ctx-tab { width: 74px; height: 39px; margin-left: 73px; background: #d6e2f3; border-top: 6px solid #2f5597; color: #4d76a8; text-align: center; font-size: 16.5px; line-height: 36px; }
.title { color: #666; font-size: 16.5px; line-height: 42px; white-space: pre; }
.title-cjk { font-size: 19px; }
.winbtns { display: flex; justify-content: flex-end; padding-right: 1px; }
.wbtn { width: 50px; height: 39px; display: flex; align-items: center; justify-content: center; }
.minbar { width: 14px; height: 3px; background: #222; margin-top: 6px; }
.wrestore { width: 14px; height: 20px; margin-top: 4px; }
.wclose { width: 15px; height: 17px; }

/* tab row */
.tabs { height: 39px; flex: none; display: flex; align-items: stretch; background: #eeeef2; font-size: 16.5px; line-height: 43px; }
.tab-file { width: 84px; background: #0072c6; color: #fff; text-align: center; }
.tab { padding: 0 22px; color: #222; }
.tab-on { width: 72px; padding: 0; margin-left: 13px; text-align: center; background: #fbfbfb; border: 1px solid #cfcfd3; border-bottom: 0; margin-bottom: -2px; position: relative; }
.quick { width: 240px; height: 31px; margin: 3px 0 0 auto; background: #fff; border: 2px solid #d8d8e6; color: #a8a8a8; font-size: 15.5px; line-height: 29px; padding-left: 5px; }
.qchev { width: 18px; height: 12px; margin: 13px 0 0 6px; }
.qcheck { width: 22px; height: 24px; margin: 7px 0 0 13px; }
.qhelp { width: 20px; height: 24px; margin: 7px 0 0 11px; }
.qhelp-dd { width: 10px; height: 10px; margin: 14px 3px 0 1px; color: #222; }

/* ribbon */
.ribbon { height: 136px; flex: none; display: flex; background: #fbfbfb; border-top: 2px solid #d4d4d6; border-bottom: 2px solid #d4d4d6; }
.group { display: flex; flex-direction: column; position: relative; }
.group::after { content: ""; position: absolute; right: 0; top: 8px; bottom: 8px; width: 2px; background: #dcdcdc; }
.g1 { width: 325px; }
.g2 { width: 79px; }
.g3 { width: 275px; }
.g4 { width: 657px; }
.g5 { width: 302px; }
.gbody { flex: 1; display: flex; min-height: 0; }
.glabel { height: 30px; margin-bottom: 4px; text-align: center; font-size: 17px; line-height: 30px; color: #333; padding-right: 2px; }
.g1 .glabel, .g2 .glabel { padding-right: 0; }
.g1 .gbody { padding-left: 5px; }
.g3 .gbody { padding-left: 14px; }
.big { display: flex; flex-direction: column; align-items: center; padding-top: 12px; flex: none; }
.big span { margin-top: 3px; white-space: nowrap; }
.big .ddg { margin-top: 14px; }
.big.off { color: #9c9c9c; }
.bw74 { width: 74px; }
.bw78 { width: 78px; }
.bw77 { width: 77px; }
.bw46 { width: 46px; }
.bw102 { width: 102px; margin-left: 3px; }
.bi { display: block; }
.bi44 { width: 44px; height: 42px; }
.bi42 { width: 42px; height: 42px; }
.bi47 { width: 47px; height: 42px; }
.smalls { display: grid; grid-auto-rows: 33px; padding-top: 6px; align-content: start; }
.c69 { grid-template-columns: 69px 69px 100px; }
.c3 { grid-template-columns: 102px 88px 70px; }
.c4 { grid-template-columns: 102px 103px 119px 100px; }
.c5 { grid-template-columns: 120px 100px; }
.si { display: flex; align-items: center; white-space: nowrap; height: 33px; }
.si svg { width: 22px; height: 22px; margin-right: 3px; flex: none; }
.si.off { color: #a4a4a4; }
.gen { width: 63px; height: 95px; margin: 5px 0 0 8px; background: #e8eff8; display: flex; flex-direction: column; align-items: center; padding-top: 6px; }
.bolt { width: 30px; height: 42px; }
.gen span { margin-top: 1px; }

/* main */
.main { flex: 1; display: flex; min-height: 0; }
.left { width: 384px; flex: none; display: flex; flex-direction: column; background: #eeeef2; padding-right: 6px; }
.phead { height: 36px; flex: none; display: flex; align-items: center; padding-left: 8px; font-size: 18px; color: #444; }
.ptitle { white-space: nowrap; }
.pgrip { flex: 1; height: 11px; margin: 0 8px 0 7px; background: repeating-conic-gradient(#c8c8cc 0 25%, transparent 0 50%) 0 0 / 4px 4px; }
.pdn { width: 13px; height: 13px; color: #222; margin-right: 11px; }
.ppin { width: 13px; height: 20px; margin-right: 10px; }
.pbox { width: 16px; height: 14px; margin-right: 8px; }
.pclose { width: 14px; height: 14px; margin-right: 13px; }
.filter { height: 38px; flex: none; display: flex; align-items: center; font-size: 17px; }
.vgrip { width: 8px; height: 26px; margin: 0 11px 0 15px; background: repeating-conic-gradient(#c0c0c4 0 25%, transparent 0 50%) 0 0 / 4px 4px; }
.combo { width: 147px; height: 33px; background: #fff; border: 1px solid #d8d8e4; display: flex; align-items: center; justify-content: space-between; padding: 0 5px 0 4px; }
.search { width: 134px; height: 33px; margin-left: 3px; background: #fff; border: 1px solid #d8d8e4; color: #aaa; line-height: 31px; padding-left: 5px; }
.fchev { width: 18px; height: 11px; margin-left: 9px; }
.fdn { width: 10px; height: 10px; margin: 14px 0 0 9px; color: #222; }

.tree { height: 739px; flex: none; background: #fff; position: relative; font-size: 18px; padding-top: 1px; }
.tree-lines { position: absolute; left: 0; top: 0; width: 378px; height: 260px; pointer-events: none; }
.trow { height: 24px; display: flex; align-items: center; position: relative; white-space: nowrap; }
.trow svg { flex: none; }
.exp { width: 14px; height: 14px; flex: none; display: block; }
.chk { width: 13px; height: 14px; margin-top: 8px; }
.l0 { padding-left: 14px; }
.ti-book { width: 21px; height: 22px; margin-right: 8px; }
.b { font-weight: 700; }
.bstar { color: #555; margin-left: 1px; }
.l1 { padding-left: 12px; }
.ti-l1 { width: 21px; height: 22px; margin: 0 6px 0 28px; }
.hl { background: #f0f0f0; padding: 0 3px; line-height: 24px; }
.a3 { color: #111; font-weight: 700; }
.l2 { padding-left: 52px; }
.l2 .chk { margin-left: 15px; }
.ti { width: 22px; height: 22px; margin: 0 7px 0 1px; }
.l3 { padding-left: 121px; }
.ti3 { width: 18px; height: 18px; margin: 0 10px 0 3px; }

.dhead { height: 39px; padding-top: 6px; border-top: 0; }
.details { flex: 1; background: #fff; min-height: 0; }
.dt { border-collapse: collapse; width: 378px; table-layout: fixed; font-size: 16.5px; }
.col-ex { width: 21px; }
.col-k { width: 78px; }
.dt td, .dt th { height: 31.5px; border: 2px solid #b4b4b4; padding: 0 2px 0 4px; text-align: left; font-weight: 400; white-space: nowrap; line-height: 20px; overflow: hidden; }
.dt th { font-weight: 700; }
.dt .ex { border: 0; padding: 0 0 0 3px; border-right: 2px solid #b4b4b4; }
.dt .v { padding-left: 5px; font-size: 16px; }

/* toolbar + viewport */
.right { flex: 1; display: flex; flex-direction: column; min-width: 0; }
.toolbar { height: 41px; flex: none; display: flex; align-items: center; background: #eeeef2; font-size: 18px; }
.tgrip { width: 32px; height: 26px; flex: none; background: repeating-conic-gradient(#c0c0c4 0 25%, transparent 0 50%) 14px 0 / 4px 4px; background-repeat: repeat-y; }
.tc { width: 33px; height: 33px; display: flex; align-items: center; justify-content: center; flex: none; }
.tc svg { width: 24px; height: 24px; }
.tsel { width: 34px; border: 2px solid #6ab0f0; background: #f2f6fb; }
.tsep { width: 8px; height: 30px; flex: none; position: relative; background: linear-gradient(#d4d4d8, #d4d4d8) center / 2px 100% no-repeat; }
.tdd { width: 17px; display: flex; justify-content: center; }
.tdd .dd { margin: 0; }
.tt { white-space: nowrap; flex: none; line-height: 24px; }
.tt-sel { margin-left: 9px; }
.tc-arrow { width: 37px; }
.tsel2 { margin-left: 14px; }
.tsel2 + .tc { margin-left: -1px; }
.tclip { width: 23px; height: 30px; margin: 0 3px 0 7px; flex: none; }
.tt-empty { margin: 0 8px 0 21px; }
.tic { width: 22px; height: 22px; margin: 0 3px 0 9px; flex: none; }
.tic-by { margin: 0 0 0 19px; width: 24px; height: 24px; }
.tic-cv { margin: 0 5px 0 20px; }
.tend { width: 10px; height: 10px; margin: 14px 0 0 15px; color: #222; flex: none; }

.viewport { flex: 1; position: relative; min-height: 0; background: linear-gradient(#6c8bdd, #fff); overflow: hidden; }
.canvas { position: absolute; left: 0; top: 0; width: 2136px; height: 1323px; }
.scale { font: 15px "Liberation Sans", sans-serif; fill: #111; }
.seg { fill: #000; }
.unit-m { font-size: 13px; }
.triad text { font: 16px "Liberation Sans", sans-serif; }
.tz { fill: #2a2af0; }
.ty { fill: #22c022; }
.tx { fill: #f01010; }
.vp-info { position: absolute; left: 24px; top: 25px; color: #000; }
.vp-title { font-size: 16.5px; line-height: 24px; font-weight: 700; }
.vp-date { font-size: 16px; line-height: 24px; }
.brand { position: absolute; right: 13px; top: 26px; color: #f6f6f8; text-align: right; font-family: Inter, "Liberation Sans", sans-serif; font-weight: 700; }
.brand-name { font-size: 53px; line-height: 60px; letter-spacing: 1px; }
.brand-ver { font-size: 26px; line-height: 26px; margin-top: 3px; color: #fff; font-weight: 600; }

/* status */
.status { height: 30px; flex: none; display: flex; align-items: center; justify-content: flex-end; background: #0078cf; border-top: 1px solid #3a9ade; color: #eaf4fc; font-size: 18px; padding-right: 12px; }
.ready { margin-right: auto; padding-left: 12px; }
.st { white-space: nowrap; }
.st-sel { margin-left: 27px; }
.st-unit { letter-spacing: .3px; }
.st-up { width: 0; height: 0; border: 7px solid transparent; border-bottom: 7px solid #fff; border-top: 0; margin: 0 7px 3px 30px; }
.st-deg { margin-left: 33px; }
.st-rad { margin-left: 24px; }
.st-temp { margin-left: 24px; }
```
